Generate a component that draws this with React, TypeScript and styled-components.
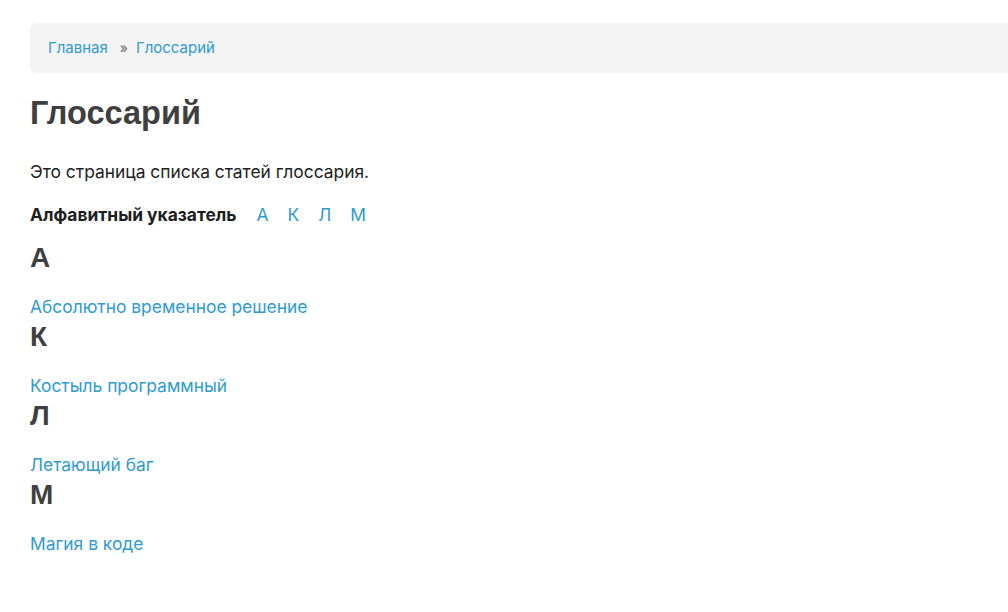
import styled, { createGlobalStyle } from 'styled-components';

const GlobalStyle = createGlobalStyle`
  html, body {
    margin: 0;
    padding: 0;
    background: #ffffff;
  }
  body {
    font-family: Inter, "Noto Sans", sans-serif;
    font-size: 17.4px;
    color: #222222;
    overflow: hidden;
  }
`;

const Page = styled.main`
  padding: 23px 0 40px 30px;
`;

const Breadcrumbs = styled.nav`
  display: flex;
  align-items: center;
  height: 50px;
  padding: 0 0 1px 18px;
  box-sizing: border-box;
  background: #f4f4f4;
  border-radius: 6px 0 0 6px;
  font-size: 15px;
`;

const Crumb = styled.a`
  color: #2f9bcf;
  text-decoration: none;
`;

const Separator = styled.span`
  color: #666666;
  margin: 0 8px 0 12px;
  font-size: 14px;
`;

const Title = styled.h1`
  font-family: "Liberation Sans", Arial, sans-serif;
  font-weight: 700;
  font-size: 32.5px;
  line-height: 1.2;
  color: #3f3f3f;
  margin: 21px 0 27px;
`;

const Intro = styled.p`
  margin: 0 0 19px;
  line-height: 24px;
`;

const AlphaIndex = styled.div`
  display: flex;
  align-items: center;
  gap: 19px;
  line-height: 24px;
  margin-bottom: 14px;
`;

const AlphaLabel = styled.strong`
  font-weight: 700;
  color: #1e1e1e;
  margin-right: 1px;
`;

const AlphaLink = styled.a`
  color: #2f9bcf;
  text-decoration: none;
`;

const LetterGroup = styled.section`
  margin-bottom: 1px;
`;

const Letter = styled.h2`
  font-family: "Liberation Sans", Arial, sans-serif;
  font-weight: 700;
  font-size: 28px;
  line-height: 34px;
  color: #3f3f3f;
  margin: 0 0 20px;
`;

const TermLink = styled.a`
  display: block;
  color: #2f9bcf;
  text-decoration: none;
  line-height: 24px;
`;

const glossary = [
  { letter: 'А', terms: ['Абсолютно временное решение'] },
  { letter: 'К', terms: ['Костыль программный'] },
  { letter: 'Л', terms: ['Летающий баг'] },
  { letter: 'М', terms: ['Магия в коде'] },
];

const App: React.FC = () => {
  return (
    <>
      <GlobalStyle />
      <Page>
        <Breadcrumbs>
          <Crumb href="#">Главная</Crumb>
          <Separator>»</Separator>
          <Crumb href="#">Глоссарий</Crumb>
        </Breadcrumbs>

        <Title>Глоссарий</Title>
        <Intro>Это страница списка статей глоссария.</Intro>

        <AlphaIndex>
          <AlphaLabel>Алфавитный указатель</AlphaLabel>
          {glossary.map(group => (
            <AlphaLink key={group.letter} href={`#${group.letter}`}>
              {group.letter}
            </AlphaLink>
          ))}
        </AlphaIndex>

        {glossary.map(group => (
          <LetterGroup key={group.letter} id={group.letter}>
            <Letter>{group.letter}</Letter>
            {group.terms.map(term => (
              <TermLink key={term} href="#">
                {term}
              </TermLink>
            ))}
          </LetterGroup>
        ))}
      </Page>
    </>
  );
};

export default App;
